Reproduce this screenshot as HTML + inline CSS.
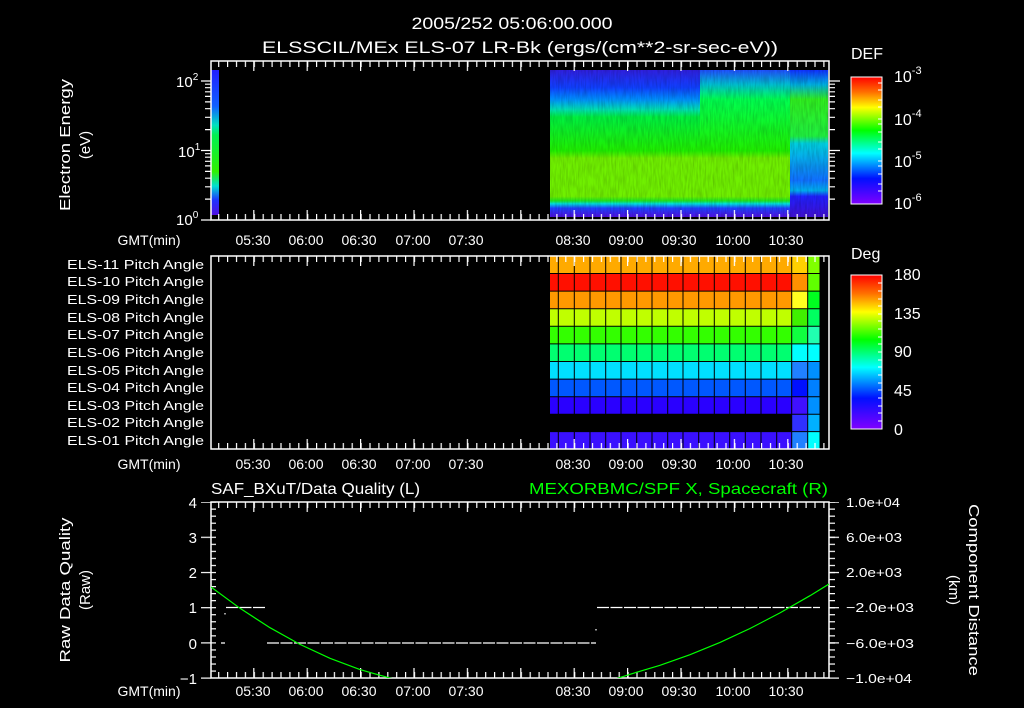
<!DOCTYPE html>
<html><head><meta charset="utf-8"><style>
html,body{margin:0;padding:0;background:#000;}
svg{display:block;}
text{font-family:"Liberation Sans",sans-serif;fill:#fff;}
</style></head><body>
<svg width="1024" height="708" viewBox="0 0 1024 708" xmlns="http://www.w3.org/2000/svg">
<defs>
<linearGradient id="cb" x1="0" y1="0" x2="0" y2="1">
<stop offset="0" stop-color="#ff0000"/><stop offset="0.12" stop-color="#ff7000"/><stop offset="0.24" stop-color="#ffff00"/><stop offset="0.42" stop-color="#00ff00"/><stop offset="0.6" stop-color="#00ffff"/><stop offset="0.8" stop-color="#0010ff"/><stop offset="1" stop-color="#8000ff"/>
</linearGradient>
<linearGradient id="sp" x1="0" y1="0" x2="0" y2="1">
<stop offset="0" stop-color="#3020e0"/><stop offset="0.12" stop-color="#1040ff"/><stop offset="0.2" stop-color="#0090ff"/><stop offset="0.27" stop-color="#00e0b0"/><stop offset="0.32" stop-color="#00f040"/><stop offset="0.55" stop-color="#20f000"/><stop offset="0.6" stop-color="#70f000"/><stop offset="0.86" stop-color="#70f000"/><stop offset="0.89" stop-color="#20e820"/><stop offset="0.91" stop-color="#00e0e0"/><stop offset="0.94" stop-color="#2040ff"/><stop offset="1" stop-color="#5010e0"/>
</linearGradient>
<linearGradient id="sp2" x1="0" y1="0" x2="0" y2="1">
<stop offset="0" stop-color="#2050ff"/><stop offset="0.1" stop-color="#00c0d0"/><stop offset="0.2" stop-color="#00ff50"/><stop offset="0.55" stop-color="#20f000"/><stop offset="0.6" stop-color="#70f000"/><stop offset="0.86" stop-color="#70f000"/><stop offset="0.89" stop-color="#20e820"/><stop offset="0.91" stop-color="#00e0e0"/><stop offset="0.94" stop-color="#2040ff"/><stop offset="1" stop-color="#5010e0"/>
</linearGradient>
<linearGradient id="sp3" x1="0" y1="0" x2="0" y2="1">
<stop offset="0" stop-color="#1030ff"/><stop offset="0.1" stop-color="#00b0e0"/><stop offset="0.2" stop-color="#30f020"/><stop offset="0.45" stop-color="#20f040"/><stop offset="0.5" stop-color="#00d0e0"/><stop offset="0.75" stop-color="#1070ff"/><stop offset="0.82" stop-color="#00b0f0"/><stop offset="0.86" stop-color="#2020ff"/><stop offset="1" stop-color="#4010d0"/>
</linearGradient>
<linearGradient id="sp4" x1="0" y1="0" x2="0" y2="1">
<stop offset="0" stop-color="#2020ff"/><stop offset="0.25" stop-color="#1060ff"/><stop offset="0.38" stop-color="#00e0c0"/><stop offset="0.45" stop-color="#00f050"/><stop offset="0.7" stop-color="#30f000"/><stop offset="0.8" stop-color="#00e0d0"/><stop offset="0.9" stop-color="#2030ff"/><stop offset="1" stop-color="#5010e0"/>
</linearGradient>
<pattern id="tmin" patternUnits="userSpaceOnUse" x="218.1" y="0" width="8.9" height="708"><rect x="0" y="0" width="1.2" height="708" fill="#fff"/></pattern>
<pattern id="tmaj" patternUnits="userSpaceOnUse" x="253.2" y="0" width="53.4" height="708"><rect x="0" y="0" width="1.2" height="708" fill="#fff"/></pattern>
<pattern id="ymin" patternUnits="userSpaceOnUse" x="0" y="501.5" width="1024" height="7.04"><rect x="0" y="0" width="1024" height="1.2" fill="#fff"/></pattern>
<pattern id="ymaj" patternUnits="userSpaceOnUse" x="0" y="501.5" width="1024" height="35.2"><rect x="0" y="0" width="1024" height="1.2" fill="#fff"/></pattern>
<filter id="nz" x="0" y="0" width="1" height="1"><feTurbulence type="fractalNoise" baseFrequency="0.6 0.08" numOctaves="2" seed="3"/><feColorMatrix values="0 0 0 0 0  0 0 0 0 0  0 0 0 0 0  0 0 0 0.6 -0.2"/><feComposite in2="SourceGraphic" operator="in"/></filter>
<clipPath id="c3"><rect x="211" y="502" width="618" height="176"/></clipPath>
</defs>

<text x="512" y="29" font-size="17" text-anchor="middle" textLength="201" lengthAdjust="spacingAndGlyphs">2005/252 05:06:00.000</text>
<text x="520" y="53" font-size="17" text-anchor="middle" textLength="516" lengthAdjust="spacingAndGlyphs">ELSSCIL/MEx ELS-07 LR-Bk  (ergs/(cm**2-sr-sec-eV))</text>

<!-- PANEL 1 -->
<rect x="211" y="70" width="8" height="145" fill="url(#sp4)"/>
<rect x="550" y="70" width="150" height="147" fill="url(#sp)"/>
<rect x="700" y="70" width="90" height="147" fill="url(#sp2)"/>
<rect x="790" y="70" width="38" height="147" fill="url(#sp3)"/>
<rect x="550" y="70" width="278" height="147" fill="#fff" filter="url(#nz)" opacity="0.5"/>
<rect x="211" y="61" width="618" height="159" fill="none" stroke="#fff" stroke-width="1.5"/>
<rect x="211" y="61" width="618" height="6" fill="url(#tmin)"/>
<rect x="211" y="61" width="618" height="10" fill="url(#tmaj)"/>
<rect x="211" y="214" width="618" height="6" fill="url(#tmin)"/>
<rect x="211" y="210" width="618" height="10" fill="url(#tmaj)"/>
<path d="M829 81h11M829 150.5h11M829 199.1h6M829 186.8h6M829 178.2h6M829 171.4h6M829 165.9h6M829 161.3h6M829 157.2h6M829 153.7h6M829 129.6h6M829 117.3h6M829 108.7h6M829 101.9h6M829 96.4h6M829 91.8h6M829 87.7h6M829 84.2h6
M201 81h10M201 150.5h10M201 220h10M205 199.1h6M205 186.8h6M205 178.2h6M205 171.4h6M205 165.9h6M205 161.3h6M205 157.2h6M205 153.7h6M205 129.6h6M205 117.3h6M205 108.7h6M205 101.9h6M205 96.4h6M205 91.8h6M205 87.7h6M205 84.2h6"
 stroke="#fff" stroke-width="1.2" fill="none"/>
<g font-size="15">
<text x="176" y="87">10<tspan font-size="10" dy="-7">2</tspan></text>
<text x="178" y="157">10<tspan font-size="10" dy="-7">1</tspan></text>
<text x="176" y="225">10<tspan font-size="10" dy="-7">0</tspan></text>
</g>
<text transform="translate(70,145) rotate(-90)" font-size="15" text-anchor="middle" textLength="132" lengthAdjust="spacingAndGlyphs">Electron Energy</text>
<text transform="translate(90,145) rotate(-90)" font-size="15" text-anchor="middle">(eV)</text>
<g font-size="14" text-anchor="middle">
<text x="149" y="245" textLength="63" lengthAdjust="spacingAndGlyphs">GMT(min)</text>
<text x="253" y="245">05:30</text><text x="306" y="245">06:00</text><text x="359" y="245">06:30</text><text x="413" y="245">07:00</text><text x="466" y="245">07:30</text>
<text x="573" y="245">08:30</text><text x="626" y="245">09:00</text><text x="679" y="245">09:30</text><text x="733" y="245">10:00</text><text x="786" y="245">10:30</text>
</g>
<text x="851" y="59" font-size="16">DEF</text>
<rect x="851" y="77" width="31" height="127" fill="url(#cb)" stroke="#fff" stroke-width="1"/>
<path d="M882 77h-4M882 83h-4M882 90h-4M882 100h-4M882 107h-4M882 119h-4M882 124h-4M882 132h-4M882 142h-4M882 149h-4M882 161h-4M882 166h-4M882 174h-4M882 184h-4M882 191h-4" stroke="#fff" stroke-width="1"/>
<g font-size="16">
<text x="894" y="82">10<tspan font-size="11" dy="-8">-3</tspan></text>
<text x="894" y="125">10<tspan font-size="11" dy="-8">-4</tspan></text>
<text x="894" y="167">10<tspan font-size="11" dy="-8">-5</tspan></text>
<text x="894" y="209">10<tspan font-size="11" dy="-8">-6</tspan></text>
</g>

<!-- PANEL 2 -->
<g>
<rect x="550" y="256" width="242" height="17.6" fill="#ffaa00"/>
<rect x="550" y="273.6" width="242" height="17.6" fill="#ff1000"/>
<rect x="550" y="291.2" width="242" height="17.6" fill="#ff9900"/>
<rect x="550" y="308.8" width="242" height="17.6" fill="#c0ff00"/>
<rect x="550" y="326.4" width="242" height="17.6" fill="#33ff00"/>
<rect x="550" y="344" width="242" height="17.6" fill="#00ff70"/>
<rect x="550" y="361.6" width="242" height="17.6" fill="#00e0ff"/>
<rect x="550" y="379.2" width="242" height="17.6" fill="#0058ff"/>
<rect x="550" y="396.8" width="242" height="17.6" fill="#2a00ff"/>
<rect x="550" y="431.4" width="242" height="17.6" fill="#3a10ff"/>
<rect x="792" y="256" width="16" height="17.6" fill="#ffd000"/>
<rect x="792" y="273.6" width="16" height="17.6" fill="#ff9000"/>
<rect x="792" y="291.2" width="16" height="17.6" fill="#ffff20"/>
<rect x="792" y="308.8" width="16" height="17.6" fill="#40f000"/>
<rect x="792" y="326.4" width="16" height="17.6" fill="#10ff40"/>
<rect x="792" y="344" width="16" height="17.6" fill="#00ffff"/>
<rect x="792" y="361.6" width="16" height="17.6" fill="#2080ff"/>
<rect x="792" y="379.2" width="16" height="17.6" fill="#0010ff"/>
<rect x="792" y="396.8" width="16" height="17.6" fill="#4010ff"/>
<rect x="792" y="414.4" width="16" height="17.6" fill="#3030ff"/>
<rect x="792" y="431.4" width="16" height="17.6" fill="#2080ff"/>
<rect x="808" y="256" width="12" height="17.6" fill="#80ff00"/>
<rect x="808" y="273.6" width="12" height="17.6" fill="#60ff00"/>
<rect x="808" y="291.2" width="12" height="17.6" fill="#00ff20"/>
<rect x="808" y="308.8" width="12" height="17.6" fill="#00ff60"/>
<rect x="808" y="326.4" width="12" height="17.6" fill="#20ffb0"/>
<rect x="808" y="344" width="12" height="17.6" fill="#00ffff"/>
<rect x="808" y="361.6" width="12" height="17.6" fill="#0090ff"/>
<rect x="808" y="379.2" width="12" height="17.6" fill="#0080ff"/>
<rect x="808" y="396.8" width="12" height="17.6" fill="#0090ff"/>
<rect x="808" y="414.4" width="12" height="17.6" fill="#00b0ff"/>
<rect x="808" y="431.4" width="12" height="17.6" fill="#00ffff"/>
<path d="M550 273.5H820M550 291.1H820M550 308.7H820M550 326.3H820M550 343.9H820M550 361.5H820M550 379.1H820M550 396.7H820M550 414.3H820M550 431.6H820
M558.3 256V449M574.3 256V449M590 256V449M605.7 256V449M621 256V449M636.7 256V449M652 256V449M667.7 256V449M683 256V449M698.7 256V449M714.3 256V449M729.7 256V449M745.3 256V449M761 256V449M776.7 256V449M791.7 256V449M807.7 256V449M820 256V449" stroke="#000" stroke-width="1"/>
<rect x="550" y="414.4" width="242" height="16.8" fill="#000"/>
</g>
<rect x="211" y="256" width="618" height="193" fill="none" stroke="#fff" stroke-width="1.5"/>
<rect x="211" y="256" width="618" height="6" fill="url(#tmin)"/>
<rect x="211" y="256" width="618" height="10" fill="url(#tmaj)"/>
<rect x="211" y="443" width="618" height="6" fill="url(#tmin)"/>
<rect x="211" y="439" width="618" height="10" fill="url(#tmaj)"/>
<g font-size="13" text-anchor="end">
<text x="204" y="269" textLength="137" lengthAdjust="spacingAndGlyphs">ELS-11 Pitch Angle</text>
<text x="204" y="286" textLength="137" lengthAdjust="spacingAndGlyphs">ELS-10 Pitch Angle</text>
<text x="204" y="304" textLength="137" lengthAdjust="spacingAndGlyphs">ELS-09 Pitch Angle</text>
<text x="204" y="322" textLength="137" lengthAdjust="spacingAndGlyphs">ELS-08 Pitch Angle</text>
<text x="204" y="339" textLength="137" lengthAdjust="spacingAndGlyphs">ELS-07 Pitch Angle</text>
<text x="204" y="357" textLength="137" lengthAdjust="spacingAndGlyphs">ELS-06 Pitch Angle</text>
<text x="204" y="375" textLength="137" lengthAdjust="spacingAndGlyphs">ELS-05 Pitch Angle</text>
<text x="204" y="392" textLength="137" lengthAdjust="spacingAndGlyphs">ELS-04 Pitch Angle</text>
<text x="204" y="410" textLength="137" lengthAdjust="spacingAndGlyphs">ELS-03 Pitch Angle</text>
<text x="204" y="427" textLength="137" lengthAdjust="spacingAndGlyphs">ELS-02 Pitch Angle</text>
<text x="204" y="445" textLength="137" lengthAdjust="spacingAndGlyphs">ELS-01 Pitch Angle</text>
</g>
<g font-size="14" text-anchor="middle">
<text x="149" y="469" textLength="63" lengthAdjust="spacingAndGlyphs">GMT(min)</text>
<text x="253" y="469">05:30</text><text x="306" y="469">06:00</text><text x="359" y="469">06:30</text><text x="413" y="469">07:00</text><text x="466" y="469">07:30</text>
<text x="573" y="469">08:30</text><text x="626" y="469">09:00</text><text x="679" y="469">09:30</text><text x="733" y="469">10:00</text><text x="786" y="469">10:30</text>
</g>
<text x="851" y="259" font-size="16">Deg</text>
<rect x="851" y="275" width="31" height="154" fill="url(#cb)" stroke="#fff" stroke-width="1"/>
<path d="M882 283h-4M882 291h-4M882 299h-4M882 306h-4M882 314h-4M882 321h-4M882 329h-4M882 337h-4M882 344h-4M882 352h-4M882 360h-4M882 367h-4M882 375h-4M882 383h-4M882 390h-4M882 398h-4M882 406h-4M882 413h-4M882 421h-4" stroke="#fff" stroke-width="1"/>
<g font-size="16">
<text x="894" y="280">180</text><text x="894" y="319">135</text><text x="894" y="357">90</text><text x="894" y="396">45</text><text x="894" y="435">0</text>
</g>

<!-- PANEL 3 -->
<text x="211" y="494" font-size="16" textLength="209" lengthAdjust="spacingAndGlyphs">SAF_BXuT/Data Quality (L)</text>
<text x="828" y="494" font-size="16" text-anchor="end" style="fill:#00ff00" textLength="299" lengthAdjust="spacingAndGlyphs">MEXORBMC/SPF X, Spacecraft (R)</text>
<rect x="211" y="502" width="618" height="176" fill="none" stroke="#fff" stroke-width="1.5"/>
<rect x="211" y="502" width="618" height="6" fill="url(#tmin)"/>
<rect x="211" y="502" width="618" height="10" fill="url(#tmaj)"/>
<rect x="211" y="672" width="618" height="6" fill="url(#tmin)"/>
<rect x="211" y="668" width="618" height="10" fill="url(#tmaj)"/>
<rect x="211" y="502" width="5" height="176" fill="url(#ymin)"/>
<rect x="201" y="502" width="10" height="177" fill="url(#ymaj)"/>
<rect x="829" y="502" width="6" height="176" fill="url(#ymin)"/>
<rect x="829" y="502" width="10" height="177" fill="url(#ymaj)"/>
<g font-size="15" text-anchor="end">
<text x="197" y="508">4</text><text x="197" y="543">3</text><text x="197" y="578">2</text><text x="197" y="613">1</text><text x="197" y="649">0</text><text x="197" y="684">−1</text>
</g>
<g font-size="13">
<text x="846" y="507" textLength="54" lengthAdjust="spacingAndGlyphs">1.0e+04</text>
<text x="846" y="542" textLength="56" lengthAdjust="spacingAndGlyphs">6.0e+03</text>
<text x="846" y="577" textLength="56" lengthAdjust="spacingAndGlyphs">2.0e+03</text>
<text x="846" y="612" textLength="68" lengthAdjust="spacingAndGlyphs">−2.0e+03</text>
<text x="846" y="648" textLength="68" lengthAdjust="spacingAndGlyphs">−6.0e+03</text>
<text x="846" y="683" textLength="66" lengthAdjust="spacingAndGlyphs">−1.0e+04</text>
</g>
<text transform="translate(70,590) rotate(-90)" font-size="15" text-anchor="middle" textLength="145" lengthAdjust="spacingAndGlyphs">Raw Data Quality</text>
<text transform="translate(90,590) rotate(-90)" font-size="15" text-anchor="middle">(Raw)</text>
<text transform="translate(969,590) rotate(90)" font-size="15" text-anchor="middle" textLength="172" lengthAdjust="spacingAndGlyphs">Component Distance</text>
<text transform="translate(949,590) rotate(90)" font-size="15" text-anchor="middle">(km)</text>
<g font-size="14" text-anchor="middle">
<text x="149" y="696" textLength="63" lengthAdjust="spacingAndGlyphs">GMT(min)</text>
<text x="253" y="696">05:30</text><text x="306" y="696">06:00</text><text x="359" y="696">06:30</text><text x="413" y="696">07:00</text><text x="466" y="696">07:30</text>
<text x="573" y="696">08:30</text><text x="626" y="696">09:00</text><text x="679" y="696">09:30</text><text x="733" y="696">10:00</text><text x="786" y="696">10:30</text>
</g>
<g stroke="#fff" stroke-width="1.2" fill="none">
<path d="M226 607.5H266" stroke-dasharray="12 1.5"/>
<path d="M267 643H596" stroke-dasharray="12 1.5"/>
<path d="M597 607.5H820" stroke-dasharray="12 1.5"/>
<path d="M221 643h4M225 613v1.5M596 629v1.5"/>
</g>
<polyline clip-path="url(#c3)" fill="none" stroke="#00ff00" stroke-width="1.2" points="211,587 240,608.3 270,627.7 300,644.4 330,658.3 360,669.6 390,678.1 420,684 600,684 630,674.3 660,665.3 690,654.7 720,642.4 750,628.5 780,612.9 810,595.7 829,584"/>
</svg>
</body></html>
